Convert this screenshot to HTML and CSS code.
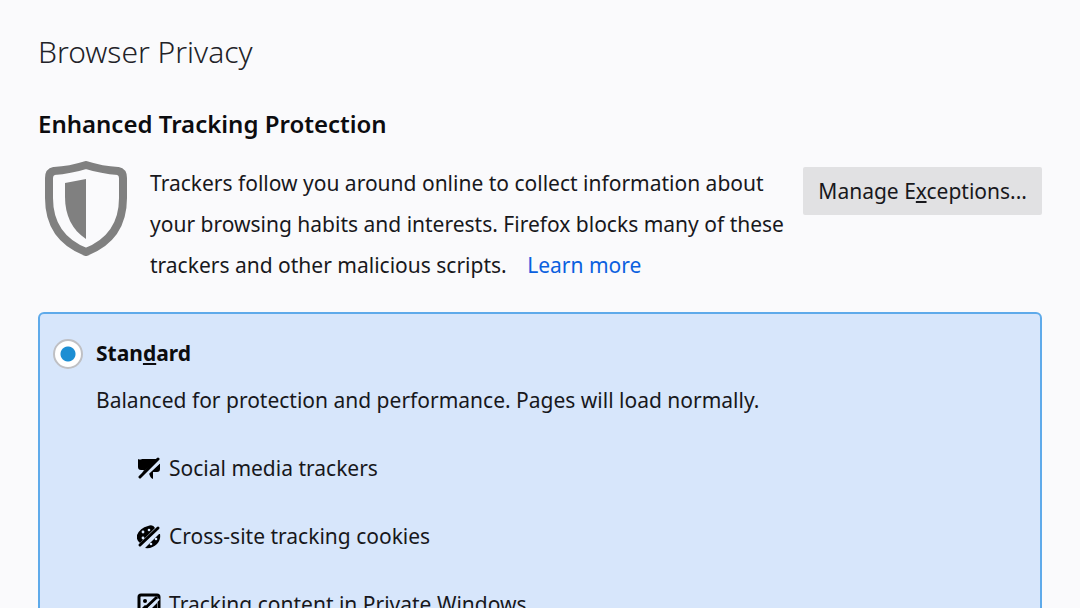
FILE: index.html
```html
<!DOCTYPE html>
<html lang="en">
<head>
    <meta charset="UTF-8">
    <meta name="viewport" content="width=device-width, initial-scale=1.0">
    <title>Browser Privacy</title>
    <link rel="stylesheet" href="styles.css">
</head>
<body>
    <main class="privacy">
        <h1>Browser Privacy</h1>

        <section class="tracking">
            <h2>Enhanced Tracking Protection</h2>
            <div class="tracking-intro">
                <svg class="shield" viewBox="0 0 82 96" aria-hidden="true">
                    <path d="M41 4 Q57 9 73 10 Q78 11 78 17 V37 C78 65 64 82 41 91 C18 82 4 65 4 37 V17 Q4 11 9 10 Q25 9 41 4 Z" fill="none" stroke="#808080" stroke-width="8" stroke-linejoin="round"/>
                    <path d="M41 18 V78 C27 69 20 54 20 36 V22 Z" fill="#808080"/>
                </svg>
                <p>Trackers follow you around online to collect information about your browsing habits and interests. Firefox blocks many of these trackers and other malicious scripts. <a class="learn-more" href="#">Learn more</a></p>
                <button type="button" class="exceptions-btn">Manage E<u>x</u>ceptions...</button>
            </div>

            <div class="option selected">
                <div class="option-title">
                    <input type="radio" id="standard" name="protection" checked>
                    <label for="standard">Stan<u>d</u>ard</label>
                </div>
                <div class="option-body">
                    <p>Balanced for protection and performance. Pages will load normally.</p>
                    <ul>
                        <li>
                            <svg class="icon" viewBox="0 0 24 24" aria-hidden="true">
                                <path d="M1 2 Q3 3 5 2 H21 L5 16 L7 13 H4 Q1 13 1 10 Z M23 6 V12 Q23 15 20 15 H16 V22 Q13 21 12 16 Z"/>
                                <path d="M3 20 L21 2" fill="none" stroke="#000" stroke-width="3" stroke-linecap="round"/>
                                <path d="M5 22 L24 4" class="slash"/>
                            </svg>
                            Social media trackers
                        </li>
                        <li>
                            <svg class="icon" viewBox="0 0 24 24" aria-hidden="true">
                                <path d="M11 1 Q16 -1 18 3 L3 18 Q-1 15 0 10 Q3 3 11 1 Z M23 9 Q24 15 20 19 Q15 24 8 23 L22 9 Z"/>
                                <path d="M3 20 L21 3" fill="none" stroke="#000" stroke-width="3" stroke-linecap="round"/>
                                <path d="M5 23 L24 5" class="slash"/>
                                <g fill="#d7e6fb">
                                    <circle cx="12" cy="5" r="1.3"/>
                                    <circle cx="6" cy="7" r="1.4"/>
                                    <circle cx="6" cy="13" r="1.4"/>
                                    <circle cx="19" cy="14" r="1.3"/>
                                    <circle cx="14" cy="19" r="1.3"/>
                                </g>
                            </svg>
                            Cross-site tracking cookies
                        </li>
                        <li>
                            <svg class="icon" viewBox="0 0 24 24" aria-hidden="true">
                                <rect x="2" y="2" width="20" height="20" rx="2" fill="none" stroke="#000" stroke-width="3"/>
                                <circle cx="8" cy="8" r="2"/>
                                <path d="M4 16 L8 12 L11 14 L4 20 Z M20 10 V20 H10 Z"/>
                                <path d="M3 20 L20 4" fill="none" stroke="#000" stroke-width="3"/>
                                <path d="M6 21 L22 6" class="slash"/>
                            </svg>
                            Tracking content in Private Windows
                        </li>
                    </ul>
                </div>
            </div>
        </section>
    </main>
</body>
</html>
```

FILE: styles.css
```css
* {
    box-sizing: border-box;
}

body {
    margin: 0;
    overflow: hidden;
    font-family: "Noto Sans", "Open Sans", sans-serif;
    font-size: 21px;
    line-height: 41px;
    color: #18181c;
    background-color: #fafafc;
}

.privacy {
    padding: 28px 38px;
}

h1,
h2,
p,
ul {
    margin: 0;
}

h1 {
    font-size: 30px;
    font-weight: 300;
    line-height: 48px;
    color: #222228;
}

h2 {
    margin-top: 28px;
    font-size: 24px;
    font-weight: 600;
    line-height: 40px;
    color: #0c0c0f;
}

.tracking-intro {
    display: flex;
    align-items: flex-start;
    padding-top: 17px;
}

.shield {
    flex: none;
    width: 82px;
    height: 96px;
    margin: 0 23px 0 7px;
}

.tracking-intro p {
    flex: 1;
    padding-top: 2px;
}

.learn-more {
    margin-left: 15px;
    color: #0a60df;
    text-decoration: none;
}

.exceptions-btn {
    flex: none;
    height: 48px;
    margin: 6px 0 0 12px;
    padding: 0 15px;
    border: none;
    border-radius: 2px;
    font: inherit;
    color: inherit;
    background-color: #e1e1e3;
}

.option {
    margin-top: 26px;
    padding: 19px 13px;
    border: 2px solid #5eaaea;
    border-radius: 6px;
    background-color: #d7e6fb;
}

.option-title {
    display: flex;
    align-items: center;
    gap: 13px;
    font-weight: 700;
    color: #0c0c0f;
}

.option-title input {
    appearance: none;
    width: 30px;
    height: 30px;
    margin: 0;
    border: 2px solid #bfc0c4;
    border-radius: 50%;
    background: radial-gradient(circle, #1c8ed3 7px, #fff 8px);
}

.option-body {
    padding: 6px 0 0 43px;
}

.option-body ul {
    padding: 27px 0 0 41px;
    list-style: none;
}

.option-body li {
    display: flex;
    align-items: center;
    gap: 8px;
    margin-bottom: 27px;
}

.icon {
    width: 24px;
    height: 24px;
}

.slash {
    fill: none;
    stroke: #d7e6fb;
    stroke-width: 2;
}
```
